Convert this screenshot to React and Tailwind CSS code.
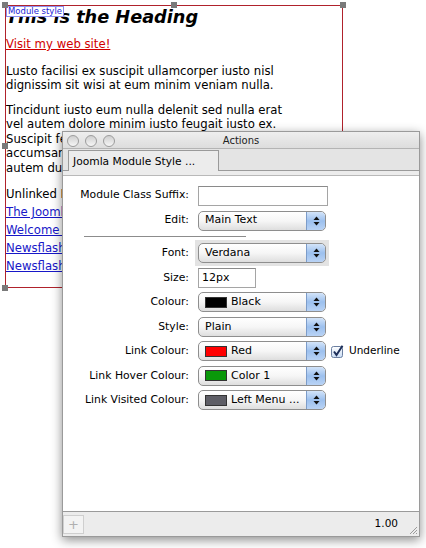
import React from "react";

const ui = "font-['DejaVu_Sans',Verdana,sans-serif]";

// Little aqua up/down arrows on the right side of a popup button
function Stepper() {
  return (
    <div className="absolute right-0 top-0 bottom-0 flex w-[19px] items-center justify-center rounded-r-[4px] border-l border-[#7c9cc9] bg-gradient-to-b from-[#d3e4f9] via-[#9cc0ee] to-[#b9d3f5]">
      <svg width="7" height="10" viewBox="0 0 7 10">
        <path d="M3.5 0.5 L6.5 4 L0.5 4 Z" fill="#111" />
        <path d="M3.5 9.5 L6.5 6 L0.5 6 Z" fill="#111" />
      </svg>
    </div>
  );
}

function Popup({ label, swatch, halo }) {
  return (
    <div className="relative">
      {halo && <div className="absolute -inset-[3px] bg-[#e3e3e3]" />}
      <div className="relative flex h-[20px] w-[128px] items-center overflow-hidden rounded-[5px] border border-[#8e8e8e] bg-gradient-to-b from-white via-[#f6f6f6] to-[#dedede] pl-[6px] text-[11px] text-black">
        {swatch && <span className={"mr-[4px] h-[11px] w-[22px] border border-[#333] " + swatch} />}
        <span>{label}</span>
        <Stepper />
      </div>
    </div>
  );
}

function Row({ label, children, tall }) {
  return (
    <div className={"flex items-center " + (tall ? "h-[25px]" : "h-[24.5px]")}>
      <div className="w-[126px] whitespace-nowrap text-right text-[10.8px] text-black">{label}</div>
      <div className="ml-[9px] flex items-center">{children}</div>
    </div>
  );
}

function Light() {
  return (
    <div className="h-[12px] w-[12px] rounded-full border border-[#9c9c9c] bg-gradient-to-b from-[#cfcfcf] to-[#f6f6f6]" />
  );
}

function Handle({ className }) {
  return <div className={"absolute h-[6px] w-[6px] bg-[#7a7a7a] " + className} />;
}

export default function App() {
  return (
    <div className="relative h-[548px] w-[426px] overflow-hidden bg-white font-['DejaVu_Sans',Verdana,sans-serif] text-black">
      {/* the page being styled */}
      <div className="relative ml-[5px] mt-[5px] h-[283px] w-[338px] border border-[#b0222c] text-[11.7px] leading-[14.5px]">
        <h1 className="whitespace-nowrap text-[17.7px] font-bold italic leading-[22px]">This is the Heading</h1>
        <a className="mt-[9px] block text-[#d10000] underline">Visit my web site!</a>
        <p className="mt-[12px] whitespace-nowrap">
          Lusto facilisi ex suscipit ullamcorper iusto nisl
          <br />
          dignissim sit wisi at eum minim veniam nulla.
        </p>
        <p className="mt-[10px] whitespace-nowrap">
          Tincidunt iusto eum nulla delenit sed nulla erat
          <br />
          vel autem dolore minim iusto feugait iusto ex.
          <br />
          Suscipit feu
          <br />
          accumsan
          <br />
          autem dui
        </p>
        <div className="mt-[12px] whitespace-nowrap">
          <div className="h-[18px]">Unlinked Item</div>
          <a className="block h-[18px] text-[#1717c8] underline">The Joomla!</a>
          <a className="block h-[18px] text-[#1717c8] underline">Welcome to</a>
          <a className="block h-[18px] text-[#1717c8] underline">Newsflash 1</a>
          <a className="block h-[18px] text-[#1717c8] underline">Newsflash 2</a>
        </div>

        <div className="absolute left-0 top-0 flex h-[11px] w-[58px] items-center justify-center border border-[#8f8ff0] bg-white text-[8.5px] leading-none text-[#1c1cd6]">
          Module style
        </div>
        <Handle className="-left-[4px] -top-[4px]" />
        <Handle className="left-[165px] -top-[4px]" />
        <Handle className="-right-[4px] -top-[4px]" />
        <Handle className="-left-[4px] top-[137px]" />
        <Handle className="-left-[4px] -bottom-[4px]" />
      </div>

      {/* floating Actions window */}
      <div className={"absolute left-[62px] top-[131px] flex h-[406px] w-[358px] flex-col border border-[#9a9a9a] bg-white shadow-[0_3px_10px_rgba(0,0,0,0.45)] " + ui}>
        <div className="relative flex h-[17px] items-center border-b border-[#b4b4b4] bg-gradient-to-b from-[#eeeeee] to-[#dddddd]">
          <div className="ml-[4px] mt-px flex gap-[6px]">
            <Light />
            <Light />
            <Light />
          </div>
          <div className="absolute inset-x-0 text-center text-[10px] text-[#222]">Actions</div>
        </div>
        <div className="flex h-[22px] items-end border-b border-[#9a9a9a] bg-[#e4e4e4]">
          <div className="relative -mb-px ml-[5px] flex h-[21px] w-[151px] items-center border border-b-0 border-[#9a9a9a] bg-[#ececec] pl-[4px] pt-[3px] text-[10.7px]">
            Joomla Module Style ...
          </div>
        </div>
        <div className="h-[5px] border-b border-[#b9b9b9] bg-[#ececec]" />

        <div className="flex-1 pt-[7px]">
          <Row label="Module Class Suffix:" tall>
            <div className="h-[20px] w-[130px] border border-[#a5a5a5] border-t-[#8a8a8a] bg-white" />
          </Row>
          <Row label="Edit:" tall>
            <Popup label="Main Text" />
          </Row>
          <div className="h-[8px] pt-[3px]">
            <div className="ml-[21px] w-[162px] border-t border-[#8c8c8c]" />
          </div>
          <Row label="Font:">
            <Popup label="Verdana" halo />
          </Row>
          <Row label="Size:">
            <div className="flex h-[20px] w-[58px] items-center border border-[#a5a5a5] border-t-[#8a8a8a] bg-white pl-[3px] text-[11px]">
              12px
            </div>
          </Row>
          <Row label="Colour:">
            <Popup label="Black" swatch="bg-[#000000]" />
          </Row>
          <Row label="Style:">
            <Popup label="Plain" />
          </Row>
          <Row label="Link Colour:">
            <Popup label="Red" swatch="bg-[#ff0000]" />
            <svg className="ml-[5px]" width="13" height="13" viewBox="0 0 13 13">
              <defs>
                <linearGradient id="cb" x1="0" y1="0" x2="0" y2="1">
                  <stop offset="0" stopColor="#ffffff" />
                  <stop offset="1" stopColor="#c9dcf4" />
                </linearGradient>
              </defs>
              <rect x="0.5" y="1.5" width="11" height="11" rx="2" fill="url(#cb)" stroke="#6a7ea0" />
              <path d="M3 6.5 L5.5 10 L11.5 0.8" fill="none" stroke="#1d2f5a" strokeWidth="2" />
            </svg>
            <span className="ml-[5px] text-[10.5px]">Underline</span>
          </Row>
          <Row label="Link Hover Colour:">
            <Popup label="Color 1" swatch="bg-[#0a980a]" />
          </Row>
          <Row label="Link Visited Colour:">
            <Popup label="Left Menu ..." swatch="bg-[#5e5e66]" />
          </Row>
        </div>

        <div className="relative flex h-[25px] items-center border-t border-[#9a9a9a] bg-[#ececec]">
          <div className="flex h-[19px] w-[21px] items-center justify-center border border-[#cfcfcf] bg-[#f3f3f3] text-[13px] leading-none text-[#b0b0b0]">
            +
          </div>
          <div className="ml-auto mr-[21px] text-[10.5px]">1.00</div>
          <svg className="absolute bottom-[1px] right-[1px]" width="9" height="9" viewBox="0 0 9 9">
            <path d="M8 1 L1 8 M8 4 L4 8 M8 7 L7 8" stroke="#9a9a9a" strokeWidth="1" />
          </svg>
        </div>
      </div>
    </div>
  );
}
